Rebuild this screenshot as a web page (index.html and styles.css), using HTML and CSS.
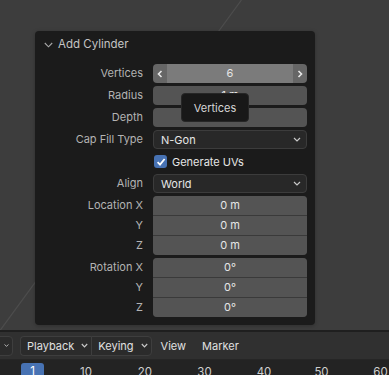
FILE: index.html
```html
<!DOCTYPE html>
<html>
<head>
<meta charset="utf-8">
<link rel="stylesheet" href="styles.css">
</head>
<body>
<div class="viewport">
  <svg class="grid-line" width="389" height="330" viewBox="0 0 389 330"><line x1="241.5" y1="0" x2="-4" y2="336" stroke="#4d4d4d" stroke-width="1.2"/></svg>
  <div class="panel">
    <div class="panel-head">
      <svg class="chev" width="9" height="6" viewBox="0 0 9 6"><path d="M0.8 1 L4.5 4.8 L8.2 1" fill="none" stroke="#a8a8a8" stroke-width="1.1"/></svg>
      <span>Add Cylinder</span>
    </div>
    <div class="grid">
      <div class="lbl">Vertices</div>
      <div class="field slider hover">
        <span class="arr"><svg width="6" height="8" viewBox="0 0 6 8"><path d="M4.5 1 L1.5 4 L4.5 7" fill="none" stroke="#e8e8e8" stroke-width="1.6"/></svg></span>
        <span class="mid">6</span>
        <span class="arr"><svg width="6" height="8" viewBox="0 0 6 8"><path d="M1.5 1 L4.5 4 L1.5 7" fill="none" stroke="#e8e8e8" stroke-width="1.6"/></svg></span>
      </div>
      <div class="lbl">Radius</div>
      <div class="field">1 m</div>
      <div class="lbl">Depth</div>
      <div class="field">2 m</div>
      <div class="lbl">Cap Fill Type</div>
      <div class="drop"><span>N-Gon</span><svg width="8" height="5" viewBox="0 0 8 5"><path d="M1 1 L4 4 L7 1" fill="none" stroke="#c8c8c8" stroke-width="1.2"/></svg></div>
      <div class="lbl"></div>
      <div class="check"><span class="box"><svg width="10" height="10" viewBox="0 0 10 10"><path d="M1.6 5.2 L4 7.6 L8.6 2" fill="none" stroke="#ffffff" stroke-width="1.8"/></svg></span><span>Generate UVs</span></div>
      <div class="lbl">Align</div>
      <div class="drop"><span>World</span><svg width="8" height="5" viewBox="0 0 8 5"><path d="M1 1 L4 4 L7 1" fill="none" stroke="#c8c8c8" stroke-width="1.2"/></svg></div>
      <div class="lbls">
        <div>Location X</div><div>Y</div><div>Z</div>
      </div>
      <div class="col">
        <div class="cell">0 m</div><div class="cell">0 m</div><div class="cell">0 m</div>
      </div>
      <div class="lbls">
        <div>Rotation X</div><div>Y</div><div>Z</div>
      </div>
      <div class="col">
        <div class="cell">0°</div><div class="cell">0°</div><div class="cell">0°</div>
      </div>
    </div>
  </div>
  <div class="tooltip">Vertices</div>
</div>
<div class="sep"></div>
<div class="header">
  <div class="btn first"><svg width="7" height="5" viewBox="0 0 7 5"><path d="M0.8 1 L3.5 3.8 L6.2 1" fill="none" stroke="#c8c8c8" stroke-width="1.2"/></svg></div>
  <div class="group">
    <div class="btn">Playback<svg width="7" height="5" viewBox="0 0 7 5"><path d="M0.8 1 L3.5 3.8 L6.2 1" fill="none" stroke="#c8c8c8" stroke-width="1.2"/></svg></div>
    <div class="btn">Keying<svg width="7" height="5" viewBox="0 0 7 5"><path d="M0.8 1 L3.5 3.8 L6.2 1" fill="none" stroke="#c8c8c8" stroke-width="1.2"/></svg></div>
  </div>
  <div class="menu">View</div>
  <div class="menu">Marker</div>
</div>
<div class="timeline">
  <div class="frame-cur">1</div>
  <span class="num" style="left:86px">10</span>
  <span class="num" style="left:145px">20</span>
  <span class="num" style="left:204.5px">30</span>
  <span class="num" style="left:264px">40</span>
  <span class="num" style="left:321.5px">50</span>
  <span class="num" style="left:380.5px">60</span>
</div>
</body>
</html>
```
FILE: styles.css
```css
html, body {
  margin: 0;
  padding: 0;
}
body {
  width: 389px;
  height: 375px;
  overflow: hidden;
  background: #3d3d3d;
  font-family: Inter, "Noto Sans", sans-serif;
  font-size: 11px;
  color: #e6e6e6;
}
.viewport {
  position: relative;
  height: 330px;
  padding: 31px 0 0 35px;
  box-sizing: border-box;
  background: #3d3d3d;
}
.grid-line {
  position: absolute;
  left: 0;
  top: 0;
}
.panel {
  position: relative;
  width: 280px;
  height: 294px;
  box-sizing: border-box;
  background: #1b1b1b;
  border-radius: 4px;
  padding: 0 8px 8px 8px;
  box-shadow: 0 1px 4px rgba(0,0,0,0.25);
}
.panel-head {
  height: 26px;
  display: flex;
  align-items: center;
  gap: 5px;
  padding-left: 1px;
  color: #c4c4c4;
  font-size: 11.5px;
  margin-bottom: 7px;
}
.chev { margin-top: 1px; }
.grid {
  display: grid;
  grid-template-columns: 100px 154px;
  column-gap: 10px;
  row-gap: 3px;
  grid-auto-rows: auto;
}
.lbl {
  height: 19px;
  line-height: 19px;
  text-align: right;
  color: #b3b3b3;
}
.field {
  height: 19px;
  line-height: 19px;
  text-align: center;
  background: #545454;
  border-radius: 4px;
  color: #e6e6e6;
}
.slider {
  display: flex;
  overflow: hidden;
  background: #666666;
}
.slider .arr {
  width: 14px;
  display: flex;
  align-items: center;
  justify-content: center;
}
.slider .mid {
  flex: 1;
  background: #7b7b7b;
}
.drop {
  height: 19px;
  box-sizing: border-box;
  border: 1px solid #3c3c3c;
  border-radius: 4px;
  background: #282828;
  display: flex;
  align-items: center;
  justify-content: space-between;
  padding: 0 5px 0 7px;
  color: #e6e6e6;
}
.check {
  height: 19px;
  display: flex;
  align-items: center;
  gap: 5px;
  color: #e6e6e6;
}
.box {
  width: 13px;
  height: 13px;
  margin-left: 1px;
  border-radius: 3px;
  background: #4772b3;
  display: flex;
  align-items: center;
  justify-content: center;
}
.lbls {
  display: flex;
  flex-direction: column;
  gap: 1px;
}
.lbls div {
  height: 19px;
  line-height: 19px;
  text-align: right;
  color: #b3b3b3;
}
.col {
  display: flex;
  flex-direction: column;
  gap: 1px;
  background: #3a3a3a;
  border-radius: 4px;
  overflow: hidden;
}
.cell {
  height: 19px;
  line-height: 19px;
  text-align: center;
  background: #545454;
}
.tooltip {
  position: absolute;
  left: 181px;
  top: 93px;
  width: 68px;
  height: 29px;
  box-sizing: border-box;
  background: #181818;
  border: 1px solid #262626;
  border-radius: 4px;
  color: #d6d6d6;
  display: flex;
  align-items: center;
  justify-content: center;
  font-size: 11px;
}
.sep {
  height: 2px;
  background: #1f1f1f;
}
.header {
  height: 27px;
  background: #303030;
  border-bottom: 1px solid #262626;
  display: flex;
  align-items: center;
  gap: 0;
  color: #e0e0e0;
}
.btn {
  height: 20px;
  box-sizing: border-box;
  display: flex;
  align-items: center;
  gap: 7px;
  padding: 0 3px 0 6px;
  border: 1px solid #3e3e3e;
  border-radius: 4px;
  background: #2b2b2b;
}
.btn.first {
  width: 20px;
  margin-left: -7px;
  padding-left: 10px;
  padding-right: 3px;
}
.group {
  display: flex;
  margin-left: 7px;
}
.group .btn:first-child {
  border-radius: 4px 0 0 4px;
  border-right: none;
}
.group .btn:last-child {
  border-radius: 0 4px 4px 0;
  padding-left: 6px;
}
.menu {
  padding: 0 8px 0 9px;
}
.menu + .menu { padding-left: 8px; }
.timeline {
  position: relative;
  height: 15px;
  background: #232323;
  color: #cfcfcf;
  overflow: hidden;
}
.frame-cur {
  position: absolute;
  left: 21px;
  top: 3px;
  width: 23px;
  height: 16px;
  background: #4772b3;
  border-radius: 3px;
  color: #ffffff;
  text-align: center;
  line-height: 16px;
  font-size: 11.5px;
}
.num {
  position: absolute;
  top: 5px;
  transform: translateX(-50%);
  font-size: 11.5px;
  line-height: 14px;
}
```
